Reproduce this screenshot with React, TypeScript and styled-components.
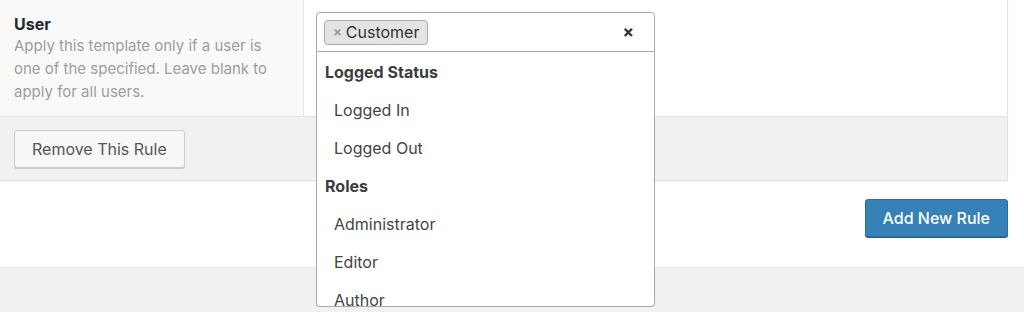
import React from "react";
import styled, { createGlobalStyle } from "styled-components";

const GlobalStyle = createGlobalStyle`
  html, body {
    margin: 0;
    padding: 0;
    background: #fff;
  }
  body {
    font-family: Inter, "Liberation Sans", sans-serif;
    -webkit-font-smoothing: antialiased;
  }
`;

const Page = styled.div`
  width: 1024px;
  height: 312px;
  overflow: hidden;
  display: flex;
  flex-direction: column;
`;

const Content = styled.div`
  height: 267px;
  background: #fff;
  border-bottom: 1px solid #e8e8e8;
`;

const Card = styled.div`
  width: 1008px;
  box-sizing: border-box;
  border-right: 1px solid #e2e2e2;
  border-bottom: 1px solid #e2e2e2;
  box-shadow: 0 1px 2px rgba(0, 0, 0, 0.05);
`;

const Row = styled.div`
  display: grid;
  grid-template-columns: 304px 1fr;
  height: 116px;
`;

const LabelCell = styled.div`
  background: #f9f9f9;
  border-right: 1px solid #e6e6e6;
  padding: 14px 14px 0;
`;

const FieldName = styled.div`
  font-size: 16px;
  font-weight: 700;
  color: #23282d;
  line-height: 20px;
`;

const Description = styled.p`
  margin: 0;
  font-size: 15px;
  line-height: 23px;
  color: #9d9d9d;
`;

const FieldCell = styled.div`
  background: #fff;
  padding: 12px;
  position: relative;
`;

const Select = styled.div`
  position: relative;
  width: 339px;
  z-index: 2;
`;

const Selection = styled.div`
  box-sizing: border-box;
  height: 40px;
  border: 1px solid #aaa;
  border-radius: 4px 4px 0 0;
  background: #fff;
  display: flex;
  align-items: center;
  padding: 0 7px;
`;

const Tag = styled.span`
  display: inline-flex;
  align-items: center;
  gap: 4px;
  height: 25px;
  box-sizing: border-box;
  padding: 0 8px 0 8px;
  background: #e4e4e4;
  border: 1px solid #aaa;
  border-radius: 4px;
  font-size: 16px;
  color: #333;
`;

const TagRemove = styled.span`
  color: #999;
  font-weight: 700;
  font-size: 13px;
`;

const Clear = styled.span`
  margin-left: auto;
  margin-right: 13px;
  font-weight: 700;
  font-size: 17px;
  color: #333;
`;

const Dropdown = styled.ul`
  position: absolute;
  top: 100%;
  left: 0;
  right: 0;
  margin: 0;
  padding: 1px 0 0;
  list-style: none;
  height: 255px;
  overflow: hidden;
  box-sizing: border-box;
  background: #fff;
  border: 1px solid #aaa;
  border-top: none;
  border-radius: 0 0 4px 4px;
`;

const Option = styled.li<{ $group?: boolean }>`
  height: 38px;
  line-height: 38px;
  font-size: 16px;
  color: ${(p) => (p.$group ? "#3c3c3c" : "#444")};
  font-weight: ${(p) => (p.$group ? 700 : 400)};
  padding-left: ${(p) => (p.$group ? "8px" : "17px")};
`;

const CardFooter = styled.div`
  background: #f1f1f1;
  border-top: 1px solid #e4e4e4;
  height: 64px;
  padding: 13px 14px 0;
  box-sizing: border-box;
`;

const Button = styled.button<{ $primary?: boolean }>`
  height: 38px;
  padding: 0 17px;
  font-family: inherit;
  font-size: 16px;
  border-radius: 3px;
  cursor: pointer;
  background: ${(p) => (p.$primary ? "#3581b8" : "#f7f7f7")};
  color: ${(p) => (p.$primary ? "#fff" : "#555")};
  border: 1px solid ${(p) => (p.$primary ? "#2a6d9e" : "#cccccc")};
  box-shadow: 0 1px 0 ${(p) => (p.$primary ? "#23618f" : "#cccccc")};
  font-weight: ${(p) => (p.$primary ? 500 : 400)};
`;

const Actions = styled.div`
  display: flex;
  justify-content: flex-end;
  padding: 18px 16px 0 0;
`;

const BottomStrip = styled.div`
  flex: 1;
  background: #f1f1f1;
`;

const options: { label: string; group?: boolean }[] = [
  { label: "Logged Status", group: true },
  { label: "Logged In" },
  { label: "Logged Out" },
  { label: "Roles", group: true },
  { label: "Administrator" },
  { label: "Editor" },
  { label: "Author" },
];

export default function App() {
  return (
    <Page>
      <GlobalStyle />
      <Content>
        <Card>
          <Row>
            <LabelCell>
              <FieldName>User</FieldName>
              <Description>
                Apply this template only if a user is one of the specified.
                Leave blank to apply for all users.
              </Description>
            </LabelCell>
            <FieldCell>
              <Select>
                <Selection>
                  <Tag>
                    <TagRemove>×</TagRemove>
                    Customer
                  </Tag>
                  <Clear>×</Clear>
                </Selection>
                <Dropdown>
                  {options.map((o) => (
                    <Option key={o.label} $group={o.group}>
                      {o.label}
                    </Option>
                  ))}
                </Dropdown>
              </Select>
            </FieldCell>
          </Row>
          <CardFooter>
            <Button>Remove This Rule</Button>
          </CardFooter>
        </Card>
        <Actions>
          <Button $primary>Add New Rule</Button>
        </Actions>
      </Content>
      <BottomStrip />
    </Page>
  );
}
